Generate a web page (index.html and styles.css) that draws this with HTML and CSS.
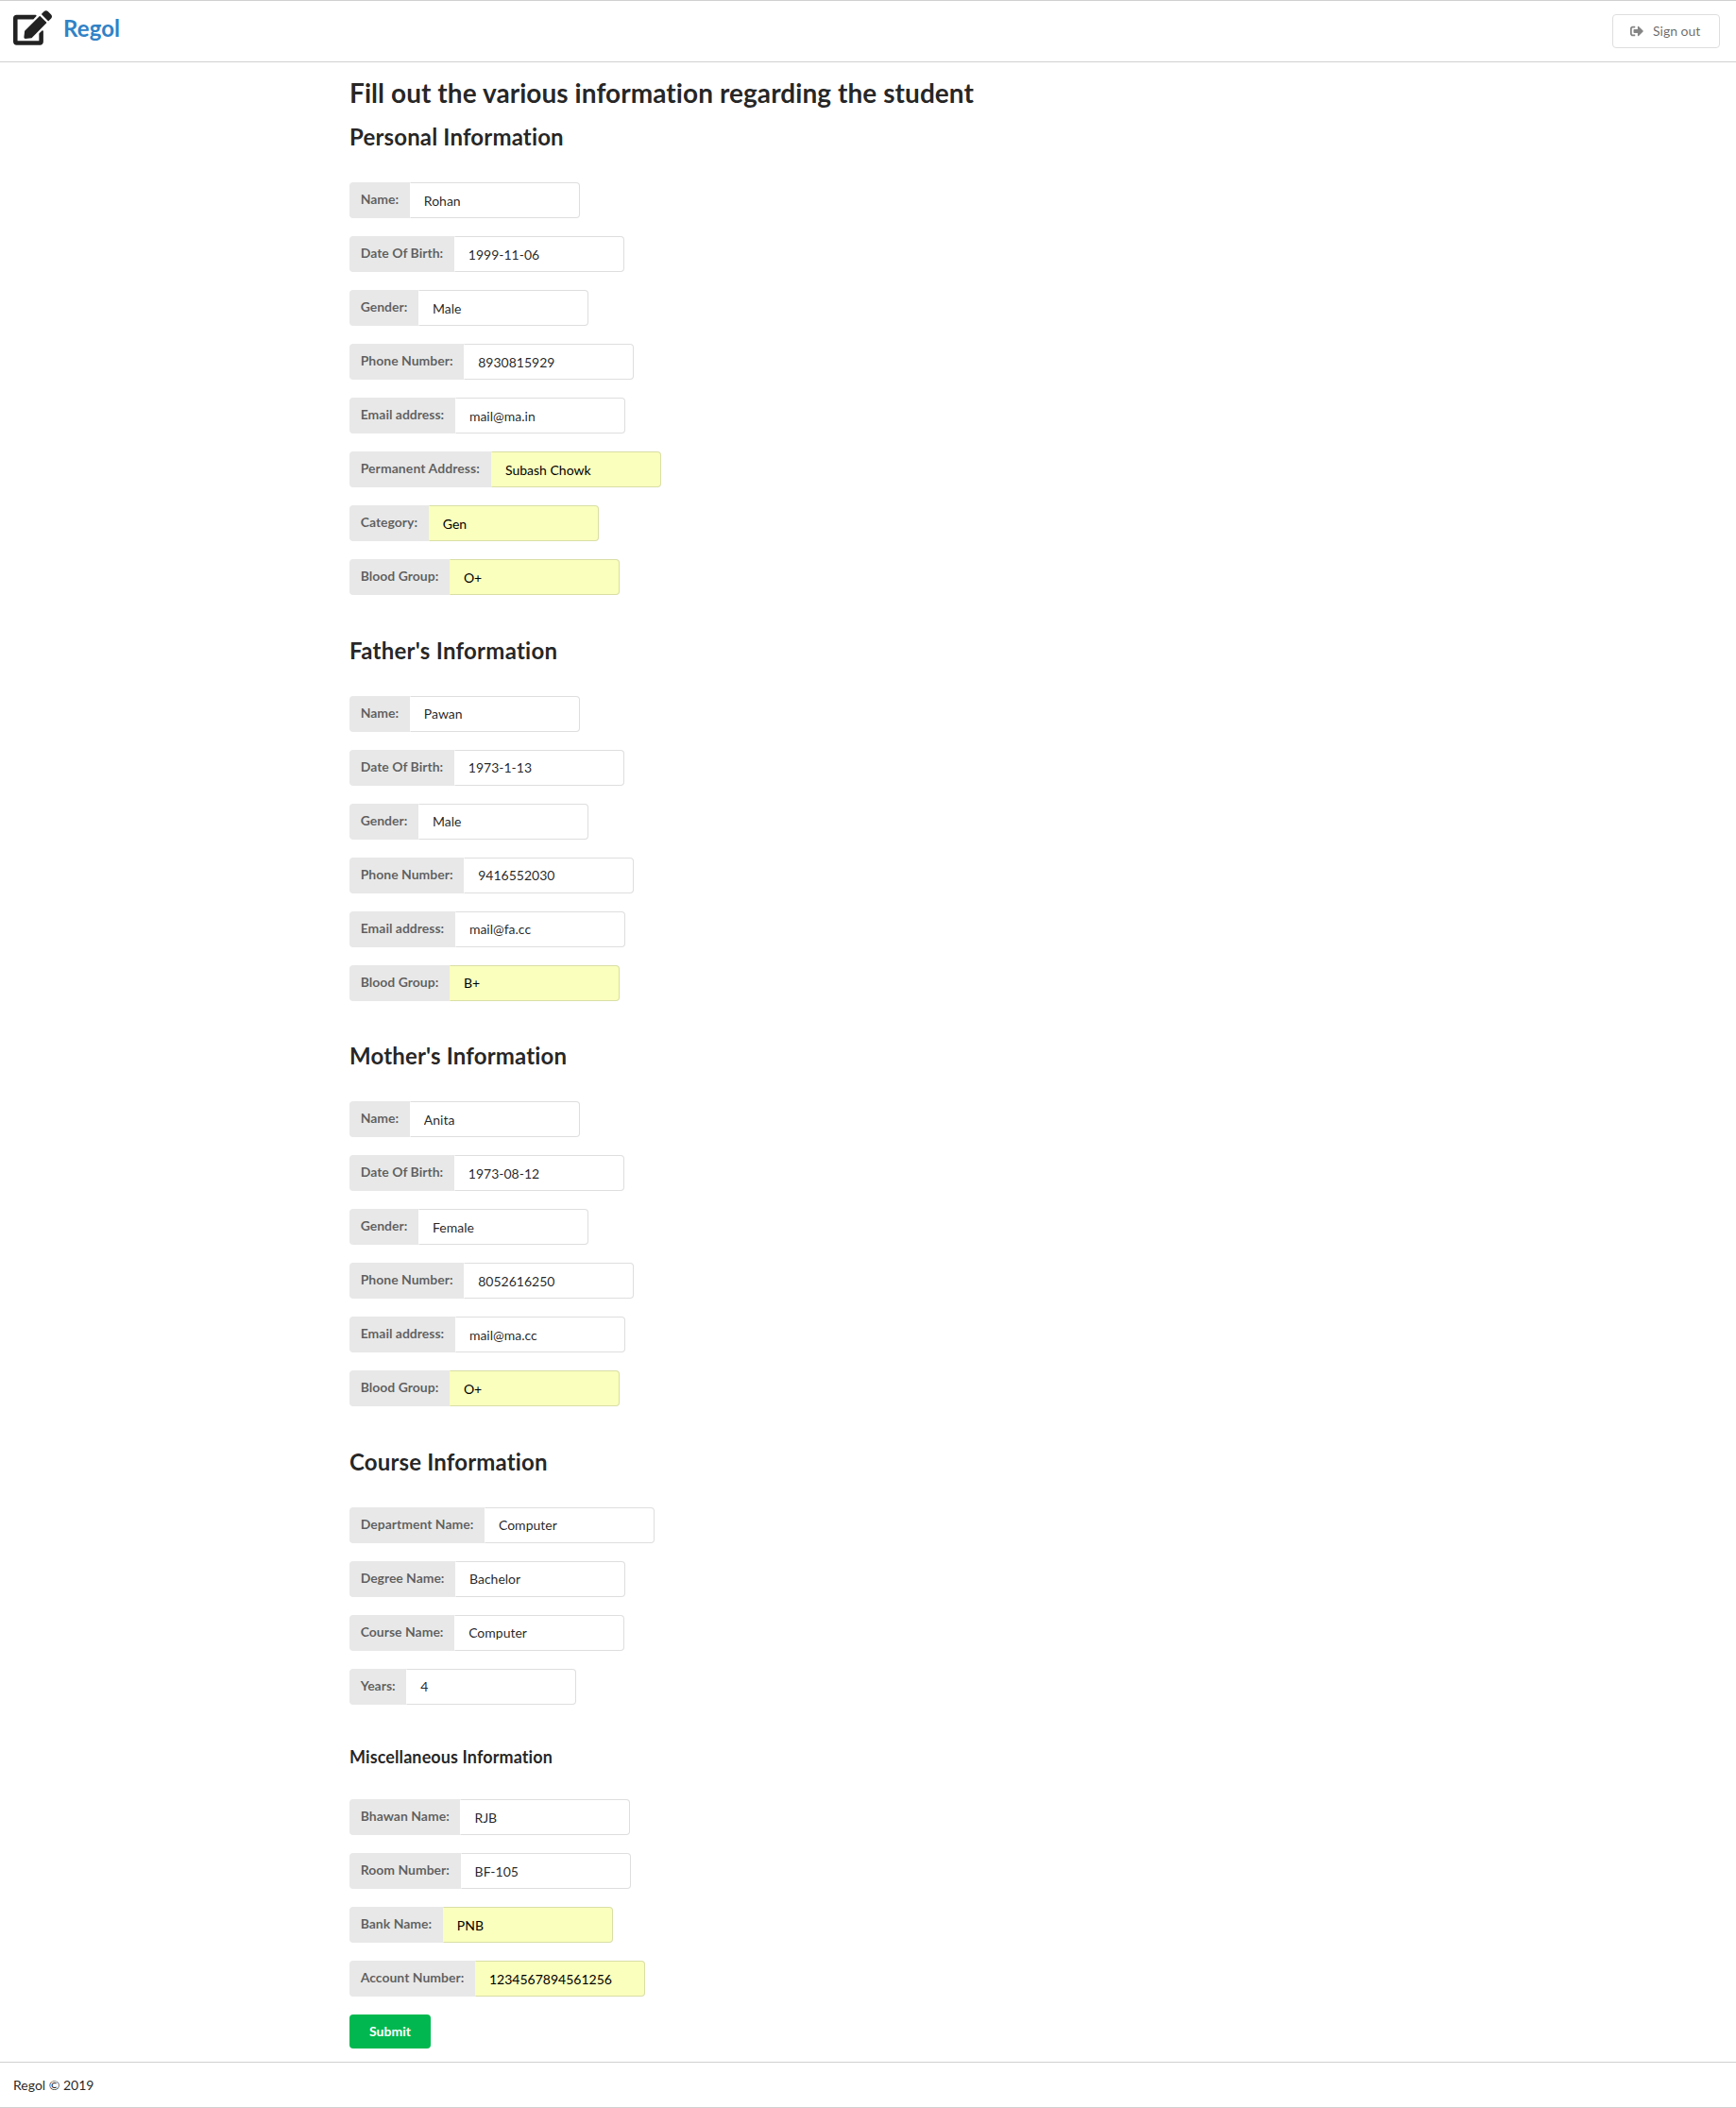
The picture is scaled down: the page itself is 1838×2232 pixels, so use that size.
FILE: index.html
```html
<!DOCTYPE html>
<html lang="en">
<head>
<meta charset="utf-8">
<title>Regol</title>
<link rel="stylesheet" href="styles.css">
</head>
<body>
<header class="topbar">
  <a class="brand">
    <svg class="brand-icon" viewBox="0 0 576 512"><path d="M402.600 83.200l90.200 90.200c3.800 3.800 3.800 10 0 13.800L274.400 405.600l-92.800 10.300c-12.400 1.400-22.900-9.100-21.500-21.500l10.300-92.800L388.800 83.200c3.800-3.800 10-3.800 13.800 0zm162-22.900l-48.800-48.800c-15.200-15.200-39.900-15.200-55.200 0l-35.400 35.400c-3.800 3.800-3.800 10 0 13.800l90.200 90.200c3.800 3.800 10 3.800 13.800 0l35.400-35.400c15.200-15.300 15.200-40 0-55.200zM384 346.200V448H64V128h229.800c3.200 0 6.200-1.300 8.500-3.500l40-40c7.600-7.600 2.200-20.500-8.500-20.500H48C21.500 64 0 85.500 0 112v352c0 26.500 21.500 48 48 48h352c26.500 0 48-21.500 48-48V306.200c0-10.700-12.900-16-20.500-8.500l-40 40c-2.200 2.300-3.500 5.300-3.500 8.500z"/></svg>
    <span class="brand-name">Regol</span>
  </a>
  <button class="signout" type="button">
    <svg class="signout-icon" viewBox="0 0 512 512"><path d="M497 273L329 441c-15 15-41 4.500-41-17v-96H152c-13.300 0-24-10.700-24-24v-96c0-13.300 10.700-24 24-24h136V88c0-21.400 25.900-32 41-17l168 168c9.300 9.400 9.300 24.600 0 34zM192 436v-40c0-6.600-5.400-12-12-12H96c-17.700 0-32-14.300-32-32V160c0-17.700 14.300-32 32-32h84c6.600 0 12-5.400 12-12V76c0-6.600-5.400-12-12-12H96c-53 0-96 43-96 96v192c0 53 43 96 96 96h84c6.600 0 12-5.400 12-12z"/></svg>
    Sign out
  </button>
</header>
<main class="content">
  <h1 class="title">Fill out the various information regarding the student</h1>
  <h2 class="heading first">Personal Information</h2>
  <div class="field"><label class="label">Name:</label><input class="value" value="Rohan"></div>
  <div class="field"><label class="label">Date Of Birth:</label><input class="value" value="1999-11-06"></div>
  <div class="field"><label class="label">Gender:</label><input class="value" value="Male"></div>
  <div class="field"><label class="label">Phone Number:</label><input class="value" value="8930815929"></div>
  <div class="field"><label class="label">Email address:</label><input class="value" value="mail@ma.in"></div>
  <div class="field"><label class="label address">Permanent Address:</label><input class="value filled" value="Subash Chowk"></div>
  <div class="field"><label class="label">Category:</label><input class="value filled" value="Gen"></div>
  <div class="field"><label class="label">Blood Group:</label><input class="value filled" value="O+"></div>

  <h2 class="heading father">Father's Information</h2>
  <div class="field"><label class="label">Name:</label><input class="value" value="Pawan"></div>
  <div class="field"><label class="label">Date Of Birth:</label><input class="value" value="1973-1-13"></div>
  <div class="field"><label class="label">Gender:</label><input class="value" value="Male"></div>
  <div class="field"><label class="label">Phone Number:</label><input class="value" value="9416552030"></div>
  <div class="field"><label class="label">Email address:</label><input class="value" value="mail@fa.cc"></div>
  <div class="field"><label class="label">Blood Group:</label><input class="value filled" value="B+"></div>

  <h2 class="heading">Mother's Information</h2>
  <div class="field"><label class="label">Name:</label><input class="value" value="Anita"></div>
  <div class="field"><label class="label">Date Of Birth:</label><input class="value" value="1973-08-12"></div>
  <div class="field"><label class="label">Gender:</label><input class="value" value="Female"></div>
  <div class="field"><label class="label">Phone Number:</label><input class="value" value="8052616250"></div>
  <div class="field"><label class="label">Email address:</label><input class="value" value="mail@ma.cc"></div>
  <div class="field"><label class="label">Blood Group:</label><input class="value filled" value="O+"></div>

  <h2 class="heading">Course Information</h2>
  <div class="field"><label class="label">Department Name:</label><input class="value" value="Computer"></div>
  <div class="field"><label class="label degree">Degree Name:</label><input class="value" value="Bachelor"></div>
  <div class="field"><label class="label">Course Name:</label><input class="value" value="Computer"></div>
  <div class="field"><label class="label">Years:</label><input class="value" value="4"></div>

  <h3 class="heading minor">Miscellaneous Information</h3>
  <div class="field"><label class="label">Bhawan Name:</label><input class="value" value="RJB"></div>
  <div class="field"><label class="label">Room Number:</label><input class="value" value="BF-105"></div>
  <div class="field"><label class="label">Bank Name:</label><input class="value filled" value="PNB"></div>
  <div class="field"><label class="label">Account Number:</label><input class="value filled" value="1234567894561256"></div>
  <button class="submit" type="button">Submit</button>
</main>
<footer class="footer">Regol © 2019</footer>
</body>
</html>
```

FILE: styles.css
```css
* { box-sizing: border-box; }

body {
  margin: 0;
  background: #fff;
  color: rgba(0, 0, 0, .87);
  font: 14px/1.4285 Lato, "Open Sans", sans-serif;
  font-variant-ligatures: none;
}

.topbar {
  display: flex;
  justify-content: space-between;
  align-items: flex-start;
  height: 66px;
  padding: 0 17px 0 14px;
  border-top: 1px solid #d0d0d1;
  border-bottom: 1px solid #d0d0d1;
}

.brand { display: flex; }

.brand-icon {
  width: 41px;
  height: 37px;
  margin-top: 10px;
  fill: #222;
}

.brand-name {
  margin: 14px 0 0 12px;
  color: #3182c6;
  font-size: 24px;
  font-weight: 700;
  line-height: 30px;
  letter-spacing: .1px;
}

.signout {
  display: flex;
  align-items: center;
  width: 114px;
  height: 36px;
  margin: 14px 0 0;
  padding: 0 0 0 18px;
  border: 1px solid #dedede;
  border-radius: 4px;
  background: #fff;
  color: rgba(0, 0, 0, .6);
  font: 14px/14px Lato, sans-serif;
}

.signout-icon {
  width: 14px;
  height: 14px;
  margin-right: 10px;
  fill: #858585;
}

.content {
  width: 1100px;
  padding-top: 14px;
  margin-left: 370px;
}

.title {
  margin: 0;
  font-size: 28px;
  font-weight: 700;
  line-height: 36px;
  letter-spacing: .065px;
}

.heading {
  margin: 43.65px 0 32.04px;
  font-size: 24px;
  font-weight: 700;
  line-height: 30.86px;
  letter-spacing: .16px;
}

.heading.first { margin-top: 14.4px; }

.heading.father { letter-spacing: .26px; }

.heading.minor {
  margin-top: 44.5px;
  margin-bottom: 32.76px;
  font-size: 18px;
  line-height: 23.14px;
  letter-spacing: .1px;
}

.field {
  display: flex;
  height: 38px;
  margin-bottom: 19px;
}

.label {
  padding: 11px 11.67px;
  border-radius: 4px 0 0 4px;
  background: #e8e8e8;
  color: rgba(0, 0, 0, .6);
  font-weight: 700;
  line-height: 14px;
}

.label.address {
  width: 150px;
  letter-spacing: .07px;
}

.label.degree {
  width: 112px;
  letter-spacing: -.05px;
  white-space: nowrap;
}

.value {
  width: 180px;
  height: 38px;
  padding: 9.5px 14px;
  border: 1px solid rgba(34, 36, 38, .15);
  border-left-color: transparent;
  border-radius: 0 4px 4px 0;
  outline: 0;
  background: #fff;
  color: rgba(0, 0, 0, .87);
  font: 14px/17px Lato, sans-serif;
}

.value.filled {
  background: #faffbd;
  color: #000;
}

.submit {
  display: block;
  width: 86px;
  height: 36px;
  padding: 0;
  border: 0;
  border-radius: 4px;
  background: #00b84f;
  color: #fff;
  font: 700 14px/14px Lato, sans-serif;
}

.footer {
  height: 49px;
  margin-top: 14px;
  padding: 14px;
  border-top: 1px solid #d0d0d1;
  border-bottom: 1px solid #d0d0d1;
  line-height: 20px;
}
```
